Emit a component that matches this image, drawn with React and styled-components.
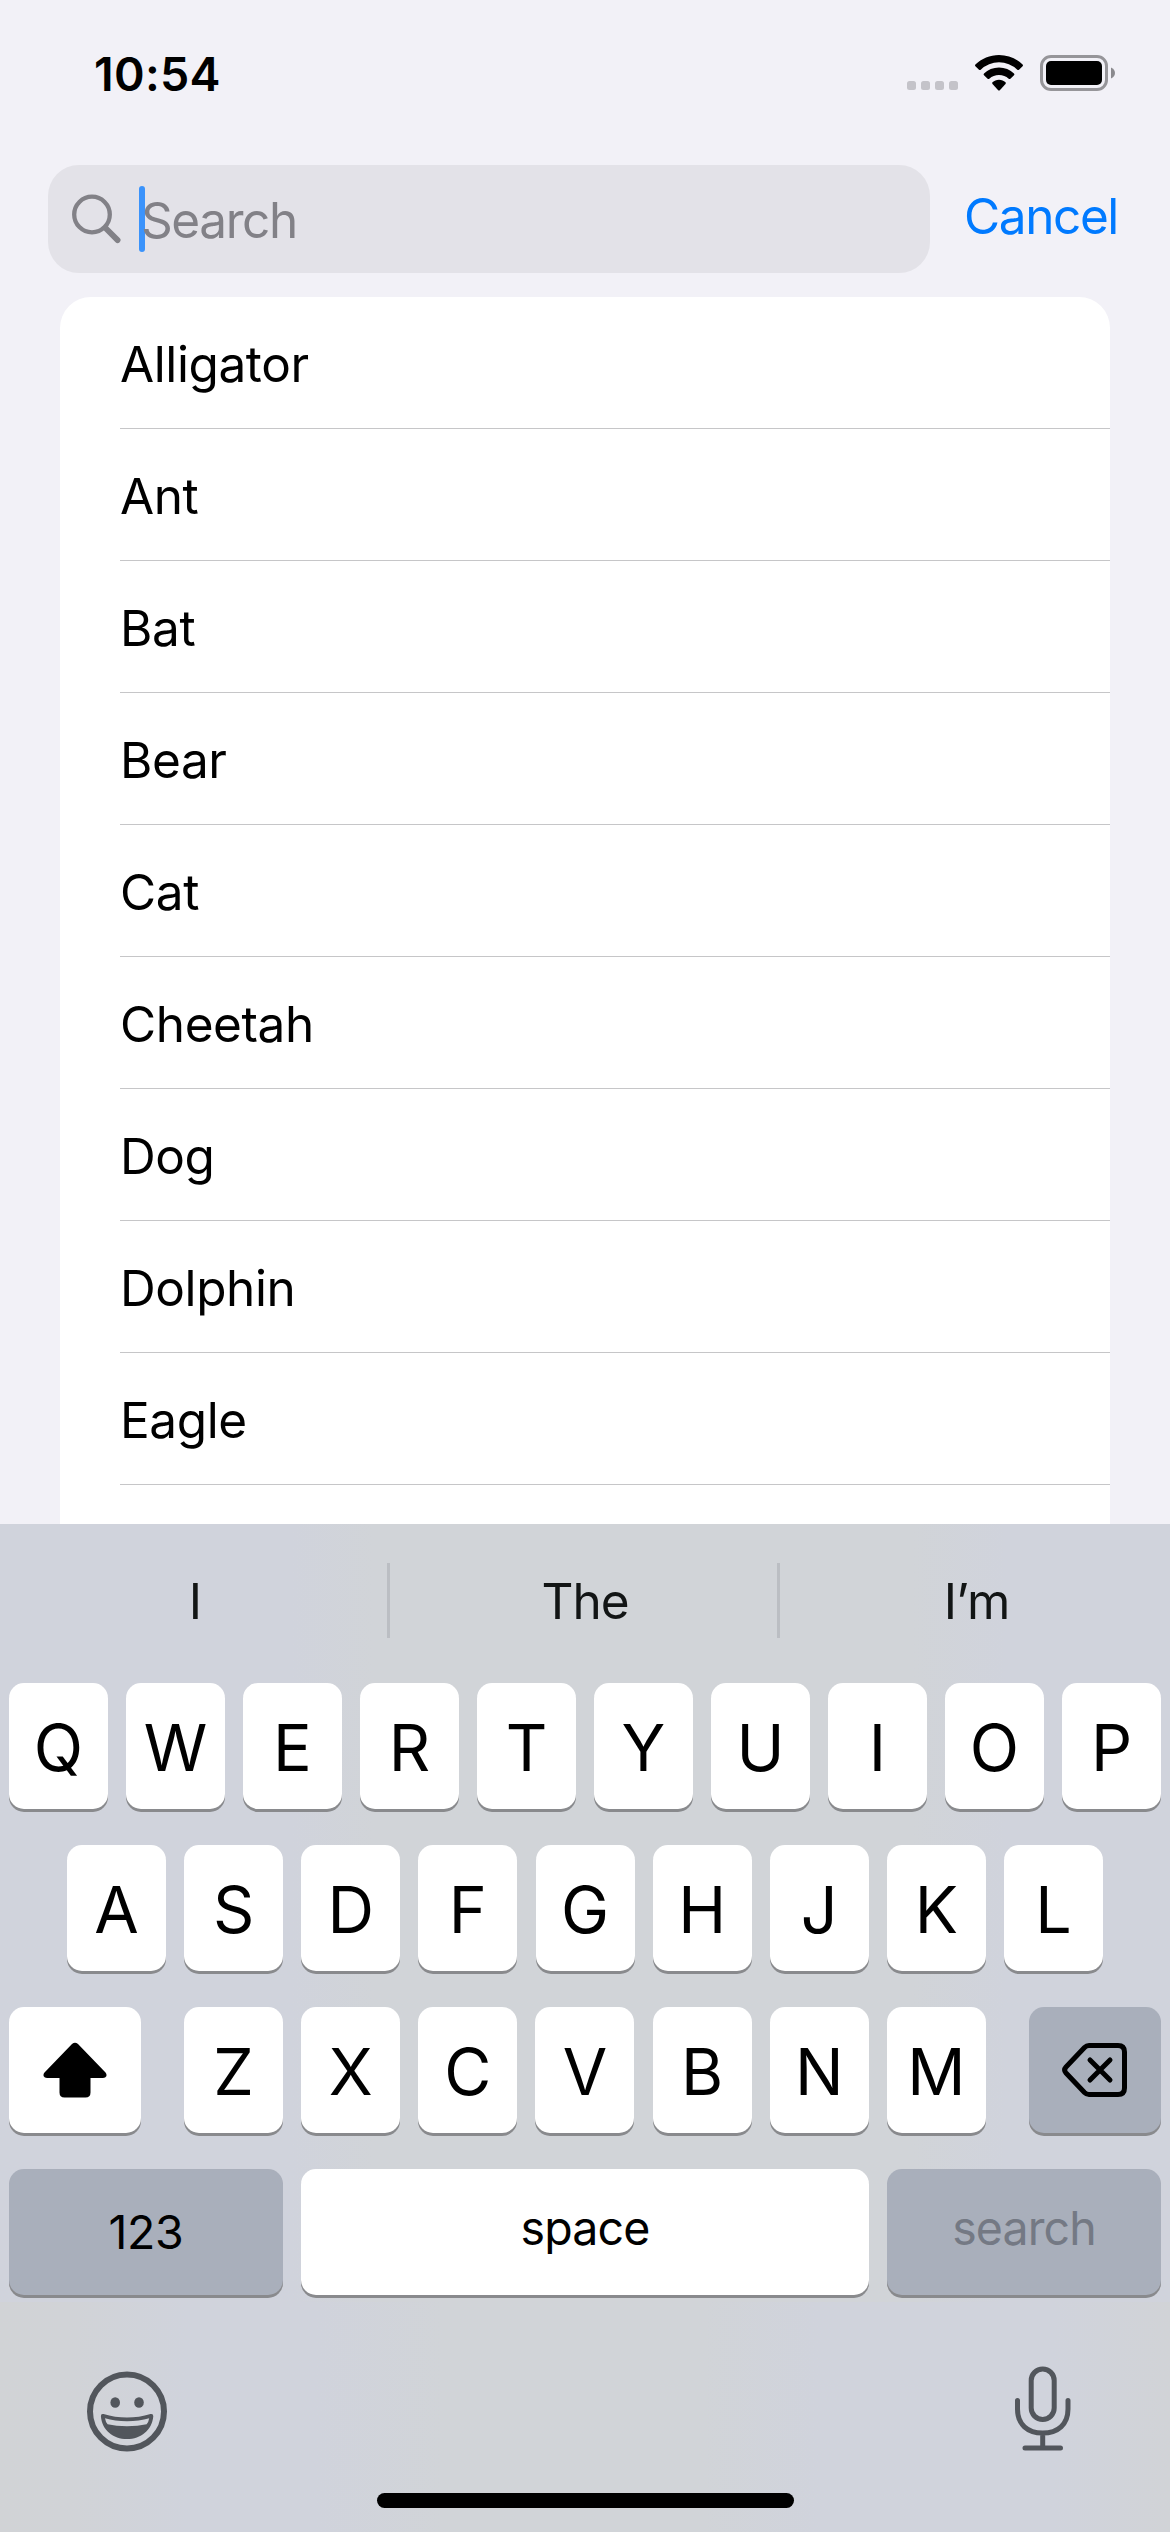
import React from "react";
import styled, { createGlobalStyle, css } from "styled-components";

const Global = createGlobalStyle`
  * { box-sizing: border-box; }
  body { margin: 0; background: #f2f1f7; }
`;

const Screen = styled.div`
  width: 1170px;
  height: 2532px;
  display: flex;
  flex-direction: column;
  overflow: hidden;
  background: #f2f1f7;
  color: #000;
  font-family: Inter, "Liberation Sans", sans-serif;
  font-size: 49.5px;
  line-height: 60px;
`;

const StatusBar = styled.header`
  height: 165px;
  flex: none;
  display: flex;
  justify-content: space-between;
  align-items: flex-start;
  padding: 44px 54px 0 94px;
`;

const Clock = styled.time`
  font-size: 46.5px;
  font-weight: 600;
  letter-spacing: 0.3px;
`;

const StatusIcons = styled.div`
  display: flex;
  align-items: center;
  gap: 17px;
  padding-top: 11px;
`;

const Signal = styled.div`
  display: flex;
  gap: 5px;
  align-self: flex-end;
  margin-bottom: 1px;
`;

const Dot = styled.span`
  width: 9px;
  height: 9px;
  border-radius: 2.5px;
  background: #c4c3c9;
`;

const SearchBar = styled.div`
  flex: none;
  display: flex;
  align-items: center;
  height: 108px;
  padding-left: 48px;
`;

const Field = styled.div`
  width: 882px;
  height: 108px;
  border-radius: 31px;
  background: #e3e2e8;
  color: #828187;
  display: flex;
  align-items: center;
  padding-left: 22px;
`;

const Caret = styled.span`
  width: 6px;
  height: 66px;
  border-radius: 3px;
  background: #3b93fb;
  margin: 0 -4px 0 16px;
`;

const Placeholder = styled.span`
  padding-top: 1px;
  letter-spacing: -1.4px;
`;

const Cancel = styled.button`
  border: 0;
  background: none;
  padding: 0;
  margin-left: 34px;
  margin-top: -6px;
  font: inherit;
  letter-spacing: -1.4px;
  color: #007aff;
`;

const List = styled.ul`
  list-style: none;
  flex: 1;
  min-height: 0;
  overflow: hidden;
  margin: 24px 60px 0;
  padding: 0 0 0 60px;
  background: #fff;
  border-radius: 31px 31px 0 0;
`;

const Item = styled.li`
  height: 132px;
  display: flex;
  align-items: center;
  padding-top: 3px;
  border-bottom: 1px solid #c6c6c8;
  letter-spacing: -0.4px;
`;

const Keyboard = styled.section`
  flex: none;
  height: 1008px;
  display: flex;
  flex-direction: column;
  background:
    linear-gradient(90deg, #d1d3d6 0, #d1d3d7 6%, #d0d3dc 16%, #d0d3dc 27%, #d1d4d8 38%, #d1d4d8 60%, #d0d3dc 70%, #d0d3dc 90%, #d1d3d7 100%)
      bottom / 100% 230px no-repeat,
    linear-gradient(90deg, #d0d3dc 0, #d0d3dc 25%, #d1d4d8 32%, #d1d4d8 78%, #d0d3dc 86%);
`;

const Suggestions = styled.div`
  height: 159px;
  display: grid;
  grid-template-columns: repeat(3, 390px);
  align-items: center;
`;

const Suggestion = styled.div`
  height: 75px;
  margin-top: -6px;
  padding-left: 3px;
  text-align: center;
  line-height: 76px;
  color: #121515;
  letter-spacing: -1px;
  border-right: ${(p) => (p.$last ? "0" : "3px solid #bbbec3")};
`;

const Keys = styled.div`
  display: flex;
  flex-direction: column;
  gap: 36px;
  padding: 0 9px;
`;

const KeyRow = styled.div`
  display: flex;
  justify-content: space-between;
  padding: 0 ${(p) => p.$inset || 0}px;
`;

const Letters = styled.div`
  display: flex;
  justify-content: space-between;
  width: 802px;
`;

const Key = styled.div`
  width: ${(p) => p.$w || 99}px;
  height: 126px;
  border-radius: 15px;
  display: flex;
  align-items: center;
  justify-content: center;
  background: ${(p) => (p.$dark ? "#a9afbb" : "#fff")};
  box-shadow: 0 3px 0 #898a8d;
  font-size: 64.5px;
  padding-top: ${(p) => (p.$letter ? 3 : 0)}px;
  ${(p) =>
    p.$label &&
    css`
      font-size: 46.5px;
      padding-bottom: ${p.$lift || 0}px;
      letter-spacing: ${p.$lift ? -0.9 : -0.3}px;
      color: ${p.$muted ? "#747984" : "#000"};
    `}
`;

const Footer = styled.div`
  display: flex;
  justify-content: space-between;
  align-items: flex-end;
  padding: 71px 98px 0 87px;
`;

const HomeBar = styled.div`
  width: 417px;
  height: 15px;
  border-radius: 8px;
  background: #000;
  margin: auto auto 24px 377px;
`;

const Wifi = () => (
  <svg width="48" height="36" viewBox="0 0 48 36">
    <path d="M24 0C33 0 41.500 3.600 47.600 9.500Q48.400 10.300 47.600 11.200L44 14.700Q43.200 15.500 42.300 14.700A26.500 26.500 0 0 0 5.700 14.700Q4.800 15.500 4 14.700L.4 11.200Q-.4 10.300.4 9.500C6.500 3.600 15 0 24 0Z" />
    <path d="M24 12.500C29.800 12.500 35.100 14.700 39 18.400Q39.900 19.300 39 20.200L35.400 23.700Q34.600 24.500 33.700 23.700A14.500 14.500 0 0 0 14.300 23.700Q13.400 24.500 12.600 23.700L9 20.200Q8.100 19.300 9 18.400C12.900 14.700 18.200 12.500 24 12.500Z" />
    <path d="M24 24.800C26.600 24.800 28.700 25.700 30.500 27.300Q31.300 28.100 30.500 29L24.800 35.200Q24 36 23.200 35.200L17.500 29Q16.700 28.100 17.500 27.300C19.300 25.700 21.400 24.800 24 24.800Z" />
  </svg>
);

const Battery = () => (
  <svg width="76" height="36" viewBox="0 0 76 36">
    <rect x="1.500" y="1.500" width="65" height="33" rx="9.500" fill="none" stroke="#969599" strokeWidth="3" />
    <rect x="6" y="6" width="56" height="24" rx="5" />
    <path d="M71 12.500C73.500 13.500 75 15.600 75 18S73.500 22.500 71 23.500Z" fill="#8b8a8e" />
  </svg>
);

const Magnifier = () => (
  <svg width="53" height="53" viewBox="0 0 53 53" fill="none" stroke="#828187" strokeLinecap="round">
    <circle cx="22" cy="21.500" r="17.800" strokeWidth="4.300" />
    <path d="M35.500 35L47.600 47.100" strokeWidth="5.800" />
  </svg>
);

const Shift = () => (
  <svg width="64" height="56" viewBox="0 0 64 56">
    <path d="M29 2Q32 -.6 35 2L62.500 30.500Q64 32.300 63.300 34.300Q62.500 36 60 36H47.500V50.500Q47.500 55.500 42.500 55.500H21.500Q16.500 55.500 16.500 50.500V36H4Q1.500 36 .7 34.300Q0 32.300 1.500 30.500Z" />
  </svg>
);

const Delete = () => (
  <svg width="66" height="54" viewBox="0 0 66 54" fill="none" stroke="#000" strokeWidth="5" strokeLinecap="round" strokeLinejoin="round">
    <path d="M27 2.500H56Q62.500 2.500 62.500 9V45Q62.500 51.500 56 51.500H27Q24.500 51.500 22.500 49.500L4 30Q1.300 27 4 24L22.500 4.500Q24.500 2.500 27 2.500Z" />
    <path d="M28 17L48 37M48 17L28 37" />
  </svg>
);

const Smile = () => (
  <svg width="80" height="81" viewBox="0 0 80 81" fill="#52565c">
    <circle cx="40" cy="40.500" r="37" fill="none" stroke="#52565c" strokeWidth="6" />
    <ellipse cx="28.200" cy="31.500" rx="4.800" ry="5.300" />
    <ellipse cx="52" cy="31.500" rx="4.800" ry="5.300" />
    <path fillRule="evenodd" d="M16.500 43Q28 46.500 40 46.500T63.500 43Q66.300 42.400 66.300 45.200C65 59 54 68 40 68S15 59 13.900 45.200Q13.700 42.400 16.500 43ZM18 47.200Q18.600 51 20.600 53.300Q29 55.200 40 55.200T59.600 53.300Q61.600 51 62.200 47.200Q52 50.200 40 50.200T18 47.200Z" />
  </svg>
);

const Mic = () => (
  <svg width="58" height="86" viewBox="0 0 58 86" fill="none" stroke="#52565c" strokeWidth="5" strokeLinecap="round">
    <rect x="17.200" y="3" width="23" height="50.500" rx="11.500" />
    <path d="M3.500 34.500V43C3.500 58.500 13.500 67 28.700 67S54 58.500 54 43V34.500M28.700 67V82M11 82H46.500" />
  </svg>
);

const animals = ["Alligator", "Ant", "Bat", "Bear", "Cat", "Cheetah", "Dog", "Dolphin", "Eagle"];
const words = ["I", "The", "I’m"];

const letterKeys = (letters) =>
  [...letters].map((c) => (
    <Key key={c} $letter>
      {c}
    </Key>
  ));

export default function App() {
  return (
    <Screen>
      <Global />
      <StatusBar>
        <Clock>10:54</Clock>
        <StatusIcons>
          <Signal>
            <Dot />
            <Dot />
            <Dot />
            <Dot />
          </Signal>
          <Wifi />
          <Battery />
        </StatusIcons>
      </StatusBar>
      <SearchBar>
        <Field>
          <Magnifier />
          <Caret />
          <Placeholder>Search</Placeholder>
        </Field>
        <Cancel>Cancel</Cancel>
      </SearchBar>
      <List>
        {animals.map((name) => (
          <Item key={name}>{name}</Item>
        ))}
      </List>
      <Keyboard>
        <Suggestions>
          {words.map((word, i) => (
            <Suggestion key={word} $last={i === 2}>
              {word}
            </Suggestion>
          ))}
        </Suggestions>
        <Keys>
          <KeyRow>{letterKeys("QWERTYUIOP")}</KeyRow>
          <KeyRow $inset={58}>{letterKeys("ASDFGHJKL")}</KeyRow>
          <KeyRow>
            <Key $w={132}>
              <Shift />
            </Key>
            <Letters>{letterKeys("ZXCVBNM")}</Letters>
            <Key $w={132} $dark>
              <Delete />
            </Key>
          </KeyRow>
          <KeyRow>
            <Key $w={274} $dark $label>
              123
            </Key>
            <Key $w={568} $label $lift={8}>
              space
            </Key>
            <Key $w={274} $dark $label $muted $lift={8}>
              search
            </Key>
          </KeyRow>
        </Keys>
        <Footer>
          <Smile />
          <Mic />
        </Footer>
        <HomeBar />
      </Keyboard>
    </Screen>
  );
}
